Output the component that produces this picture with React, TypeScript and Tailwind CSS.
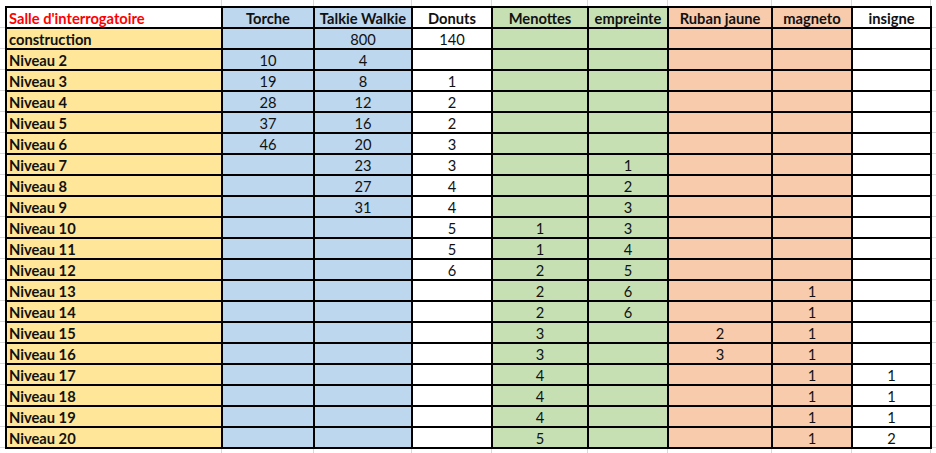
import { Fragment } from "react";

const cols = [
  { name: "Torche", bg: "bg-[#bdd7ee]" },
  { name: "Talkie Walkie", bg: "bg-[#bdd7ee]" },
  { name: "Donuts", bg: "bg-white" },
  { name: "Menottes", bg: "bg-[#c6e0b4]" },
  { name: "empreinte", bg: "bg-[#c6e0b4]" },
  { name: "Ruban jaune", bg: "bg-[#f8cbad]" },
  { name: "magneto", bg: "bg-[#f8cbad]" },
  { name: "insigne", bg: "bg-white" },
];

// torche, talkie, donuts, menottes, empreinte, ruban, magneto, insigne
const rows: [string, (number | "")[]][] = [
  ["construction", ["", 800, 140, "", "", "", "", ""]],
  ["Niveau 2", [10, 4, "", "", "", "", "", ""]],
  ["Niveau 3", [19, 8, 1, "", "", "", "", ""]],
  ["Niveau 4", [28, 12, 2, "", "", "", "", ""]],
  ["Niveau 5", [37, 16, 2, "", "", "", "", ""]],
  ["Niveau 6", [46, 20, 3, "", "", "", "", ""]],
  ["Niveau 7", ["", 23, 3, "", 1, "", "", ""]],
  ["Niveau 8", ["", 27, 4, "", 2, "", "", ""]],
  ["Niveau 9", ["", 31, 4, "", 3, "", "", ""]],
  ["Niveau 10", ["", "", 5, 1, 3, "", "", ""]],
  ["Niveau 11", ["", "", 5, 1, 4, "", "", ""]],
  ["Niveau 12", ["", "", 6, 2, 5, "", "", ""]],
  ["Niveau 13", ["", "", "", 2, 6, "", 1, ""]],
  ["Niveau 14", ["", "", "", 2, 6, "", 1, ""]],
  ["Niveau 15", ["", "", "", 3, "", 2, 1, ""]],
  ["Niveau 16", ["", "", "", 3, "", 3, 1, ""]],
  ["Niveau 17", ["", "", "", 4, "", "", 1, 1]],
  ["Niveau 18", ["", "", "", 4, "", "", 1, 1]],
  ["Niveau 19", ["", "", "", 4, "", "", 1, 1]],
  ["Niveau 20", ["", "", "", 5, "", "", 1, 2]],
];

const colTemplate = "grid-cols-[214px_90px_96px_78px_94px_78px_102px_78px_77px]";

// faint excel gridlines peeking out around the table
const ColStubs = () => (
  <div className={`grid ${colTemplate} gap-x-[2px] px-[2px]`}>
    {Array.from({ length: 9 }).map((_, i) => (
      <div key={i} className="border-r border-[#d9d9d9] -mr-[1px]" />
    ))}
  </div>
);

const RowStubs = () => (
  <div className="grid grid-rows-[repeat(21,19px)] gap-y-[2px] py-[2px]">
    {Array.from({ length: 21 }).map((_, i) => (
      <div key={i} className="border-b border-[#d9d9d9] -mb-[1px]" />
    ))}
  </div>
);

export default function App() {
  return (
    <div
      className="w-[936px] h-[453px] bg-white overflow-hidden grid grid-cols-[5px_927px_4px] grid-rows-[6px_443px_4px] text-[14.7px] text-[#111]"
      style={{ fontFamily: "Lato, 'Open Sans', sans-serif" }}
    >
      <div />
      <ColStubs />
      <div />

      <RowStubs />

      {/* the table */}
      <div className={`grid ${colTemplate} grid-rows-[repeat(21,19px)] gap-[2px] p-[2px] bg-black`}>
        <div className="bg-white font-bold text-[#ff0000] pl-[2px] pt-[1px] flex items-center leading-none">
          Salle d'interrogatoire
        </div>
        {cols.map((c) => (
          <div key={c.name} className={`${c.bg} font-bold pt-[1px] flex items-center justify-center leading-none`}>
            {c.name}
          </div>
        ))}
        {rows.map(([label, vals]) => (
          <Fragment key={label}>
            <div className="bg-[#ffe699] font-bold pl-[2px] pt-[1px] flex items-center leading-none">
              {label}
            </div>
            {vals.map((v, i) => (
              <div key={i} className={`${cols[i].bg} pt-[1px] flex items-center justify-center leading-none`}>
                {v}
              </div>
            ))}
          </Fragment>
        ))}
      </div>

      <RowStubs />

      <div />
      <ColStubs />
      <div />
    </div>
  );
}
